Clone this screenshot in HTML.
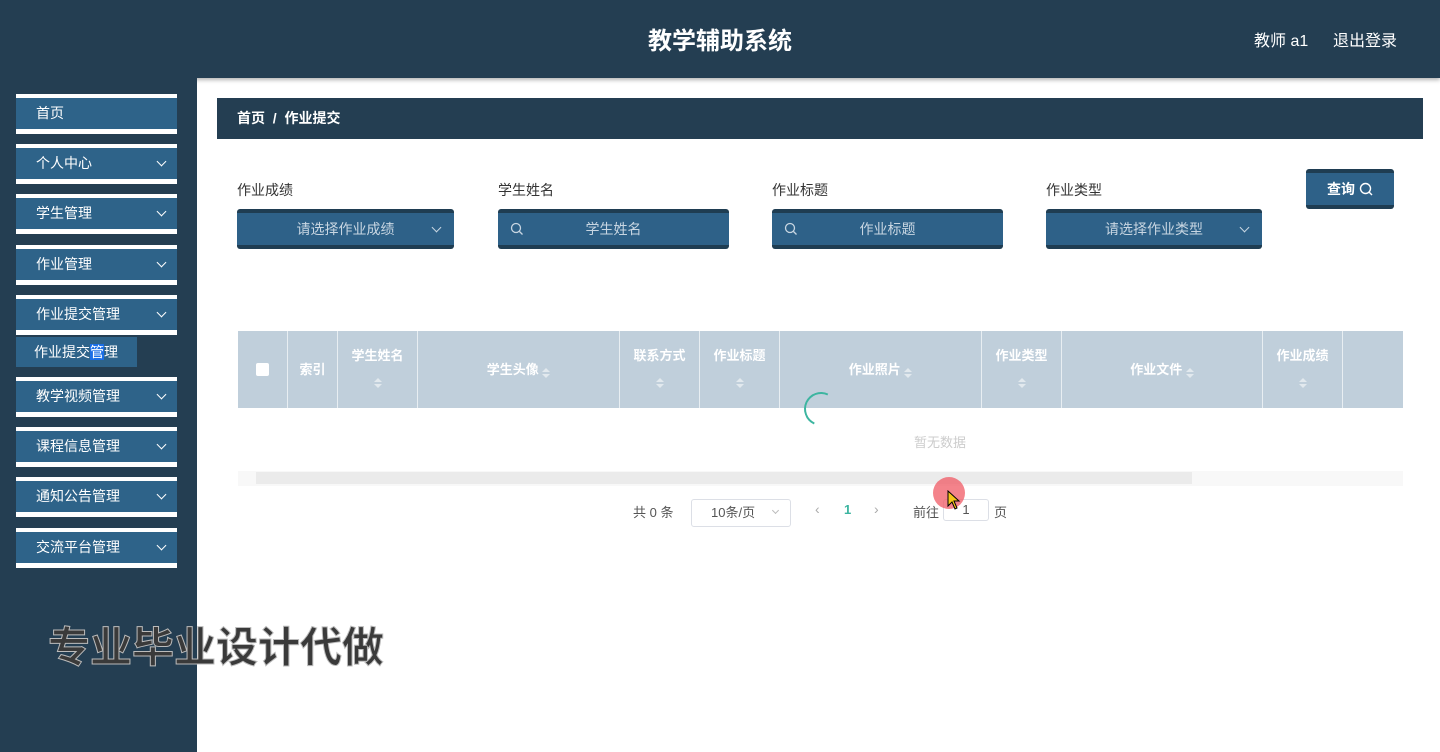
<!DOCTYPE html>
<html><head><meta charset="utf-8"><style>
*{margin:0;padding:0;box-sizing:border-box}
body{width:1440px;height:752px;overflow:hidden;background:#fff;font-family:"Liberation Sans","Noto Sans CJK SC",sans-serif;position:relative}
.abs{position:absolute}
.top{left:0;top:0;width:1440px;height:78px;background:#243e52;box-shadow:0 2px 4px rgba(0,0,0,.3)}
.side{left:0;top:78px;width:197px;height:674px;background:#243e52}
.mi{position:absolute;left:16px;width:161px;height:40px;background:#fff;padding:4px 0 5px}
.mi div{height:31px;background:#2e6389;color:#fff;font-size:14px;line-height:31px;padding-left:20px;position:relative}
.chev{position:absolute;right:12px;top:10px;width:7px;height:7px;border-right:1.5px solid #fff;border-bottom:1.5px solid #fff;transform:rotate(45deg)}
.lbl{font-size:14px;color:#333}
.inp{position:absolute;height:40px;background:#2e6188;border-top:4px solid #1f3d52;border-bottom:4px solid #1f3d52;border-radius:3px;color:#c8d6e2;font-size:14px;line-height:32px;text-align:center}
.th{position:absolute;top:331px;height:77px;border-right:1px solid #e8eef2;color:#fff;font-weight:bold;font-size:13px;text-align:center}
.sort{display:inline-block;width:0;height:0;border-left:4px solid transparent;border-right:4px solid transparent;border-bottom:4px solid #e2e9ee;position:relative;top:-8px}
.sort:after{content:"";position:absolute;left:-4px;top:6px;border-left:4px solid transparent;border-right:4px solid transparent;border-top:4px solid #e2e9ee}
.mag{position:absolute;left:12px;top:9px}
</style></head><body>
<div class="abs top"></div>
<div class="abs" style="left:0;width:1440px;top:21px;text-align:center;color:#fff;font-size:24px;font-weight:bold">教学辅助系统</div>
<div class="abs" style="left:1254px;top:27px;color:#fff;font-size:16px">教师 a1</div>
<div class="abs" style="left:1333px;top:27px;color:#fff;font-size:16px">退出登录</div>
<div class="abs side"></div>
<div class="mi" style="top:94px"><div>首页</div></div>
<div class="mi" style="top:144px"><div>个人中心<span class="chev"></span></div></div>
<div class="mi" style="top:194px"><div>学生管理<span class="chev"></span></div></div>
<div class="mi" style="top:245px"><div>作业管理<span class="chev"></span></div></div>
<div class="mi" style="top:295px"><div>作业提交管理<span class="chev"></span></div></div>
<div class="abs" style="left:16px;top:337px;width:121px;height:30px;background:#2e6389;color:#fff;font-size:14px;line-height:30px;padding-left:18px">作业提交<span style="background:#1a6ee6">管</span>理</div>
<div class="mi" style="top:377px"><div>教学视频管理<span class="chev"></span></div></div>
<div class="mi" style="top:427px"><div>课程信息管理<span class="chev"></span></div></div>
<div class="mi" style="top:477px"><div>通知公告管理<span class="chev"></span></div></div>
<div class="mi" style="top:528px"><div>交流平台管理<span class="chev"></span></div></div>
<div class="abs" style="left:48px;top:614px;font-size:42px;font-weight:bold;color:#3a3a3a;-webkit-text-stroke:1px #bbb;letter-spacing:0px">专业毕业设计代做</div>

<div class="abs" style="left:217px;top:98px;width:1206px;height:41px;background:#243e52;color:#fff;font-size:14px;font-weight:bold;line-height:41px;padding-left:20px">首页 &nbsp;/&nbsp; 作业提交</div>

<div class="abs lbl" style="left:237px;top:180px">作业成绩</div>
<div class="abs lbl" style="left:498px;top:180px">学生姓名</div>
<div class="abs lbl" style="left:772px;top:180px">作业标题</div>
<div class="abs lbl" style="left:1046px;top:180px">作业类型</div>
<div class="inp" style="left:237px;top:209px;width:217px">请选择作业成绩<span class="chev" style="top:11px;right:14px;border-color:#c8d6e2"></span></div>
<div class="inp" style="left:498px;top:209px;width:231px">学生姓名<svg class="mag" width="14" height="14"><circle cx="6" cy="6" r="4.5" fill="none" stroke="#c8d6e2" stroke-width="1.3"/><path d="M9.5 9.5L12.5 12.5" stroke="#c8d6e2" stroke-width="1.3"/></svg></div>
<div class="inp" style="left:772px;top:209px;width:231px">作业标题<svg class="mag" width="14" height="14"><circle cx="6" cy="6" r="4.5" fill="none" stroke="#c8d6e2" stroke-width="1.3"/><path d="M9.5 9.5L12.5 12.5" stroke="#c8d6e2" stroke-width="1.3"/></svg></div>
<div class="inp" style="left:1046px;top:209px;width:216px">请选择作业类型<span class="chev" style="top:11px;right:14px;border-color:#c8d6e2"></span></div>
<div class="inp" style="left:1306px;top:169px;width:88px;color:#fff;font-weight:bold">查询 <svg width="14" height="14" style="vertical-align:-2px"><circle cx="6.5" cy="6.5" r="5" fill="none" stroke="#fff" stroke-width="1.4"/><path d="M10 10L13 13" stroke="#fff" stroke-width="1.4"/></svg></div>

<div class="abs" style="left:238px;top:331px;width:1165px;height:77px;background:#c0cfdb"></div>
<div class="th" style="left:238px;width:50px"><span style="display:inline-block;margin-top:32px;width:13px;height:13px;background:#fff;border-radius:2px"></span></div>
<div class="th" style="left:288px;width:50px;line-height:77px">索引</div>
<div class="th" style="left:338px;width:80px;padding-top:14px">学生姓名<br><span class="sort" style="top:6px"></span></div>
<div class="th" style="left:418px;width:202px;line-height:77px">学生头像 <span class="sort" style="top:-2px"></span></div>
<div class="th" style="left:620px;width:80px;padding-top:14px">联系方式<br><span class="sort" style="top:6px"></span></div>
<div class="th" style="left:700px;width:80px;padding-top:14px">作业标题<br><span class="sort" style="top:6px"></span></div>
<div class="th" style="left:780px;width:202px;line-height:77px">作业照片 <span class="sort" style="top:-2px"></span></div>
<div class="th" style="left:982px;width:80px;padding-top:14px">作业类型<br><span class="sort" style="top:6px"></span></div>
<div class="th" style="left:1062px;width:201px;line-height:77px">作业文件 <span class="sort" style="top:-2px"></span></div>
<div class="th" style="left:1263px;width:80px;padding-top:14px">作业成绩<br><span class="sort" style="top:6px"></span></div>
<div class="abs" style="left:804px;top:392px;width:34px;height:34px;border:2px solid transparent;border-left-color:#3cb5a0;border-top-color:#3cb5a0;border-radius:50%;transform:rotate(-20deg)"></div>
<div class="abs" style="left:914px;top:432px;color:#ccc;font-size:13px">暂无数据</div>
<div class="abs" style="left:238px;top:471px;width:1165px;height:15px;background:#f8f8f8"></div>
<div class="abs" style="left:256px;top:472px;width:936px;height:12px;background:#ebebeb"></div>
<div class="abs" style="left:633px;top:502px;font-size:13px;color:#555">共 0 条</div>
<div class="abs" style="left:691px;top:499px;width:100px;height:28px;border:1px solid #dcdfe6;border-radius:3px;font-size:13px;color:#555;line-height:26px;padding-left:19px">10条/页<span style="position:absolute;right:12px;top:8px;width:5px;height:5px;border-right:1px solid #bbb;border-bottom:1px solid #bbb;transform:rotate(45deg)"></span></div>
<div class="abs" style="left:815px;top:501px;font-size:14px;color:#aaa">‹</div>
<div class="abs" style="left:844px;top:502px;font-size:13px;color:#3cb5a0;font-weight:bold">1</div>
<div class="abs" style="left:874px;top:501px;font-size:14px;color:#aaa">›</div>
<div class="abs" style="left:913px;top:502px;font-size:13px;color:#555">前往</div>
<div class="abs" style="left:943px;top:499px;width:46px;height:22px;border:1px solid #dcdfe6;border-radius:3px;font-size:13px;color:#555;line-height:20px;text-align:center">1</div>
<div class="abs" style="left:994px;top:502px;font-size:13px;color:#555">页</div>
<div class="abs" style="left:933px;top:477px;width:32px;height:32px;border-radius:50%;background:rgba(240,90,100,.75)"></div>
<svg class="abs" style="left:947px;top:490px" width="14" height="20"><path d="M1 1 L1 16 L5 12 L8 19 L10 18 L7 11 L12 11 Z" fill="#f5c518" stroke="#000" stroke-width="1"/></svg>
</body></html>
